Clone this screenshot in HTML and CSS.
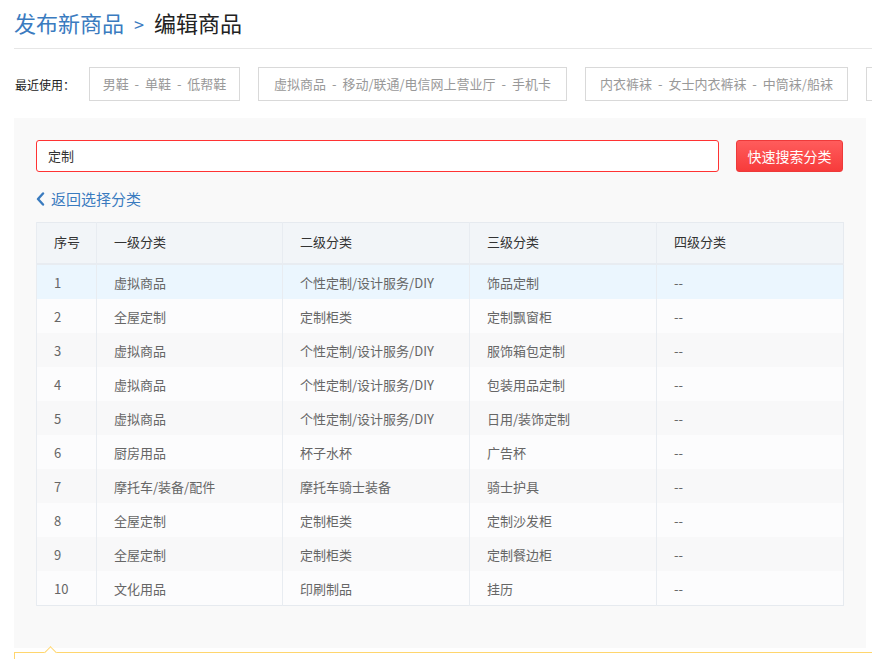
FILE: index.html
```html
<!DOCTYPE html>
<html lang="zh-CN">
<head>
<meta charset="utf-8">
<title>编辑商品</title>
<link rel="stylesheet" href="styles.css">
</head>
<body>
<div class="page">
  <div class="title">
    <a class="crumb" href="#">发布新商品</a><span class="sep">&gt;</span><span class="current">编辑商品</span>
  </div>
  <div class="recent">
    <span class="recent-label">最近使用：</span>
    <span class="recent-item w1">男鞋 - 单鞋 - 低帮鞋</span>
    <span class="recent-item w2">虚拟商品 - 移动/联通/电信网上营业厅 - 手机卡</span>
    <span class="recent-item w3">内衣裤袜 - 女士内衣裤袜 - 中筒袜/船袜</span>
    <span class="recent-item w4"></span>
  </div>
  <div class="panel">
    <div class="search">
      <div class="search-input">定制</div>
      <button class="search-btn">快速搜索分类</button>
    </div>
    <a class="back" href="#"><svg class="chev" width="9" height="14" viewBox="0 0 9 14"><path d="M7 1.5 L2 7 L7 12.5" fill="none" stroke="#3a7bbf" stroke-width="2.4" stroke-linecap="round" stroke-linejoin="round"/></svg>返回选择分类</a>
    <table class="cats">
      <colgroup><col class="c0"><col class="c1"><col class="c2"><col class="c3"><col class="c4"></colgroup>
      <thead>
        <tr><th>序号</th><th>一级分类</th><th>二级分类</th><th>三级分类</th><th>四级分类</th></tr>
      </thead>
      <tbody>
        <tr class="hover"><td>1</td><td>虚拟商品</td><td>个性定制/设计服务/DIY</td><td>饰品定制</td><td>--</td></tr>
        <tr><td>2</td><td>全屋定制</td><td>定制柜类</td><td>定制飘窗柜</td><td>--</td></tr>
        <tr><td>3</td><td>虚拟商品</td><td>个性定制/设计服务/DIY</td><td>服饰箱包定制</td><td>--</td></tr>
        <tr><td>4</td><td>虚拟商品</td><td>个性定制/设计服务/DIY</td><td>包装用品定制</td><td>--</td></tr>
        <tr><td>5</td><td>虚拟商品</td><td>个性定制/设计服务/DIY</td><td>日用/装饰定制</td><td>--</td></tr>
        <tr><td>6</td><td>厨房用品</td><td>杯子水杯</td><td>广告杯</td><td>--</td></tr>
        <tr><td>7</td><td>摩托车/装备/配件</td><td>摩托车骑士装备</td><td>骑士护具</td><td>--</td></tr>
        <tr><td>8</td><td>全屋定制</td><td>定制柜类</td><td>定制沙发柜</td><td>--</td></tr>
        <tr><td>9</td><td>全屋定制</td><td>定制柜类</td><td>定制餐边柜</td><td>--</td></tr>
        <tr><td>10</td><td>文化用品</td><td>印刷制品</td><td>挂历</td><td>--</td></tr>
      </tbody>
    </table>
  </div>
  <div class="tip"></div>
</div>
</body>
</html>
```

FILE: styles.css
```css
html, body {
  margin: 0;
  padding: 0;
  background: #fff;
  font-family: "Noto Sans CJK SC", "Noto Sans", sans-serif;
  color: #333;
  overflow: hidden;
}
a { text-decoration: none; }

.page {
  padding-left: 14px;
}

.title {
  height: 44px;
  line-height: 44px;
  padding-bottom: 4px;
  border-bottom: 1px solid #e6e6e6;
  font-size: 22px;
  white-space: nowrap;
}
.crumb { color: #3a7bbf; }
.sep {
  color: #3a7bbf;
  font-size: 18px;
  margin: 0 10px 0 10px;
}
.current { color: #222; }

.recent {
  display: flex;
  align-items: center;
  gap: 18px;
  margin-top: 18px;
  height: 34px;
  white-space: nowrap;
  overflow: hidden;
}
.recent-label {
  font-size: 12px;
  color: #222;
  width: 57px;
  margin-right: -1px;
  flex: none;
  margin-left: 1px;
}
.recent-item {
  flex: none;
  box-sizing: border-box;
  height: 34px;
  line-height: 32px;
  border: 1px solid #d9d9d9;
  font-size: 13px;
  color: #999;
  text-align: center;
  word-spacing: 3px;
}
.w1 { width: 151px; }
.w2 { width: 309px; }
.w3 { width: 263px; }
.w4 { width: 140px; }

.panel {
  margin-top: 17px;
  width: 852px;
  box-sizing: border-box;
  background: #f9f9f9;
  padding: 22px 23px 42px 22px;
}

.search {
  display: flex;
  gap: 17px;
  height: 32px;
}
.search-input {
  flex: 1;
  box-sizing: border-box;
  height: 32px;
  line-height: 30px;
  border: 1px solid #f33;
  border-radius: 3px;
  background: #fff;
  padding-left: 11px;
  font-size: 13px;
  color: #333;
}
.search-btn {
  flex: none;
  width: 107px;
  height: 32px;
  box-sizing: border-box;
  border: 1px solid #ee3a3a;
  border-radius: 3px;
  background: linear-gradient(#ff5c5c, #f73b3b);
  color: #fff;
  font-family: inherit;
  font-size: 14px;
  padding: 0;
  cursor: pointer;
}

.back {
  display: flex;
  align-items: center;
  gap: 6px;
  margin-top: 16px;
  height: 20px;
  font-size: 15px;
  color: #3a7bbf;
}
.chev { flex: none; margin-top: 1px; }

.cats {
  margin-top: 14px;
  width: 100%;
  border-collapse: collapse;
  table-layout: fixed;
  border: 1px solid #e6eaef;
  font-size: 13px;
}
.c0 { width: 60px; }
.c1 { width: 186px; }
.c2 { width: 187px; }
.c3 { width: 187px; }
.c4 { width: 187px; }
.cats th, .cats td {
  text-align: left;
  padding: 0 0 0 17px;
  border-left: 1px solid #e8ecf1;
  white-space: nowrap;
}
.cats th {
  height: 37px;
  padding-bottom: 3px;
  background: #f2f5f8;
  color: #333;
  font-weight: normal;
  border-bottom: 2px solid #e8ecf1;
}
.cats td {
  height: 34px;
  color: #666;
}
.cats tbody tr { background: #fcfcfd; }
.cats tbody tr:nth-child(odd) { background: #f8f8f9; }
.cats tbody tr.hover { background: #ebf6fe; }

.tip {
  position: relative;
  margin-top: 4px;
  height: 30px;
  border-top: 1px solid #ffd66e;
  border-left: 1px solid #ffd66e;
  background: #fff;
}
.tip::before {
  content: "";
  position: absolute;
  left: 31px;
  top: -5px;
  width: 8px;
  height: 8px;
  background: #fff;
  border-top: 1px solid #ffd66e;
  border-left: 1px solid #ffd66e;
  transform: rotate(45deg);
}
```
